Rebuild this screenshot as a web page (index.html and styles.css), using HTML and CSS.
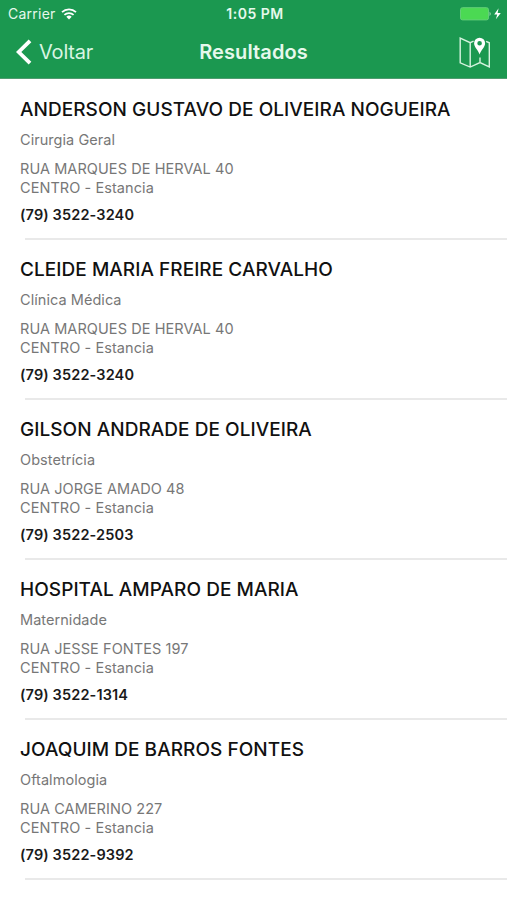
FILE: index.html
```html
<!DOCTYPE html>
<html lang="pt-BR">
  <head>
    <meta charset="UTF-8" />
    <meta name="viewport" content="width=device-width, initial-scale=1.0" />
    <title>Resultados</title>
    <link rel="stylesheet" href="styles.css">
  </head>
  <body>
    <header class="header">
      <div class="status">
        <div class="carrier">
          <span class="carrier-name">Carrier</span>
          <svg width="16" height="12" viewBox="0 0 16 12">
            <path d="M1 4.2a10.2 10.2 0 0 1 14 0M3.4 6.9a6.8 6.8 0 0 1 9.2 0" />
            <path class="fill" d="M8 11.5L5.3 8.8a4 4 0 0 1 5.4 0z" />
          </svg>
        </div>
        <div class="time">1:05 PM</div>
        <div class="power">
          <svg width="42" height="14" viewBox="0 0 42 14">
            <rect class="battery" x="0.5" y="0.7" width="28" height="12.2" rx="2" />
            <path class="tip" d="M29.6 4.7q2 2 0 4.4z" />
            <path class="fill" d="M38.6 1.2L34.2 7.4h3l-1.3 4.8 4.9-6.3h-3.2z" />
          </svg>
        </div>
      </div>
      <nav class="nav">
        <a class="back" href="#">
          <svg width="16" height="26" viewBox="0 0 16 26">
            <path d="M14 1.8L2.7 13 14 24.2" />
          </svg>
          <span>Voltar</span>
        </a>
        <h1 class="title">Resultados</h1>
        <a class="map" href="#">
          <svg width="32" height="32" viewBox="0 0 32 32">
            <path d="M14.6 5.2L11.2 6.7 1.2 2.2v24.6l10 4.3 9.8-4.5 9.3 4.2V6.8l-3.2-1.5M11.2 6.7v24.4M21 21.5v5.1" />
            <path class="pin" d="M20.6 1.7a5.5 5.5 0 0 0-5.5 5.5c0 4 4.2 7 5.5 11.2 1.3-4.2 5.5-7.2 5.5-11.2a5.5 5.5 0 0 0-5.5-5.5zm0 3.2a2.3 2.3 0 1 1 0 4.6 2.3 2.3 0 0 1 0-4.6z" />
          </svg>
        </a>
      </nav>
    </header>
    <main class="list">
      <div class="item">
        <h2 class="name">ANDERSON GUSTAVO DE OLIVEIRA NOGUEIRA</h2>
        <p class="specialty">Cirurgia Geral</p>
        <p class="address">RUA MARQUES DE HERVAL 40<br>CENTRO - Estancia</p>
        <p class="phone">(79) 3522-3240</p>
      </div>
      <div class="item">
        <h2 class="name">CLEIDE MARIA FREIRE CARVALHO</h2>
        <p class="specialty">Clínica Médica</p>
        <p class="address">RUA MARQUES DE HERVAL 40<br>CENTRO - Estancia</p>
        <p class="phone">(79) 3522-3240</p>
      </div>
      <div class="item">
        <h2 class="name">GILSON ANDRADE DE OLIVEIRA</h2>
        <p class="specialty">Obstetrícia</p>
        <p class="address">RUA JORGE AMADO 48<br>CENTRO - Estancia</p>
        <p class="phone">(79) 3522-2503</p>
      </div>
      <div class="item">
        <h2 class="name">HOSPITAL AMPARO DE MARIA</h2>
        <p class="specialty">Maternidade</p>
        <p class="address">RUA JESSE FONTES 197<br>CENTRO - Estancia</p>
        <p class="phone">(79) 3522-1314</p>
      </div>
      <div class="item">
        <h2 class="name">JOAQUIM DE BARROS FONTES</h2>
        <p class="specialty">Oftalmologia</p>
        <p class="address">RUA CAMERINO 227<br>CENTRO - Estancia</p>
        <p class="phone">(79) 3522-9392</p>
      </div>
    </main>
  </body>
</html>
```
FILE: styles.css
```css
* {
  box-sizing: border-box;
}
body {
  margin: 0;
  height: 900px;
  overflow: hidden;
  background-color: white;
  font-family: Inter, "Liberation Sans", sans-serif;
}
h1,
h2,
p {
  margin: 0;
}
svg {
  display: block;
  fill: none;
  stroke: white;
}
.fill {
  fill: white;
  stroke: none;
}
.header {
  height: 79px;
  background-color: #1b9850;
  border-bottom: 1px solid #4f9c70;
  color: #e6f8ec;
}
.status {
  display: grid;
  grid-template-columns: 1fr auto 1fr;
  align-items: center;
  height: 27px;
  padding: 0 5px 0 8px;
  font-size: 14px;
  line-height: 17px;
}
.carrier {
  display: flex;
  align-items: center;
  gap: 5px;
}
.carrier-name {
  letter-spacing: 0.25px;
}
.carrier svg {
  stroke-width: 1.8;
}
.time {
  font-weight: 600;
  letter-spacing: 0.5px;
}
.power {
  justify-self: end;
}
.battery {
  fill: #4bd953;
  stroke: #62cf78;
  stroke-width: 1;
}
.tip {
  fill: #bdebc6;
  stroke: none;
}
.nav {
  display: grid;
  grid-template-columns: 1fr auto 1fr;
  align-items: center;
  height: 50px;
  padding: 0 16px;
}
.back {
  display: flex;
  align-items: center;
  gap: 7px;
  color: #d9f5e2;
  font-size: 20px;
  letter-spacing: -0.2px;
  line-height: 26px;
  text-decoration: none;
}
.back svg {
  stroke-width: 3.8;
}
.title {
  font-size: 20px;
  font-weight: 600;
  letter-spacing: 0.1px;
  line-height: 26px;
}
.map {
  justify-self: end;
}
.map svg {
  stroke: #d6f3df;
  stroke-width: 1.4;
}
.map .pin {
  fill: white;
  stroke: none;
  fill-rule: evenodd;
}
.item {
  position: relative;
  height: 160px;
  padding: 19px 20px 0;
}
/* separator starts a bit after the text and runs to the edge */
.item::after {
  content: "";
  position: absolute;
  left: 25px;
  right: 0;
  bottom: -1px;
  height: 2px;
  background-color: #e9e9e9;
}
.name {
  color: #111;
  font-size: 19px;
  font-weight: 500;
  letter-spacing: 0.05px;
  line-height: 24px;
  white-space: nowrap;
}
.specialty {
  margin-top: 8px;
  color: #777;
  font-size: 14.5px;
  letter-spacing: 0.05px;
  line-height: 19px;
}
.address {
  margin-top: 11px;
  color: #777;
  font-size: 14.5px;
  letter-spacing: 0.07px;
  line-height: 18.7px;
}
.phone {
  margin-top: 8px;
  color: #1a1a1a;
  font-size: 14.5px;
  font-weight: 600;
  letter-spacing: 0.13px;
  line-height: 19px;
}
```
